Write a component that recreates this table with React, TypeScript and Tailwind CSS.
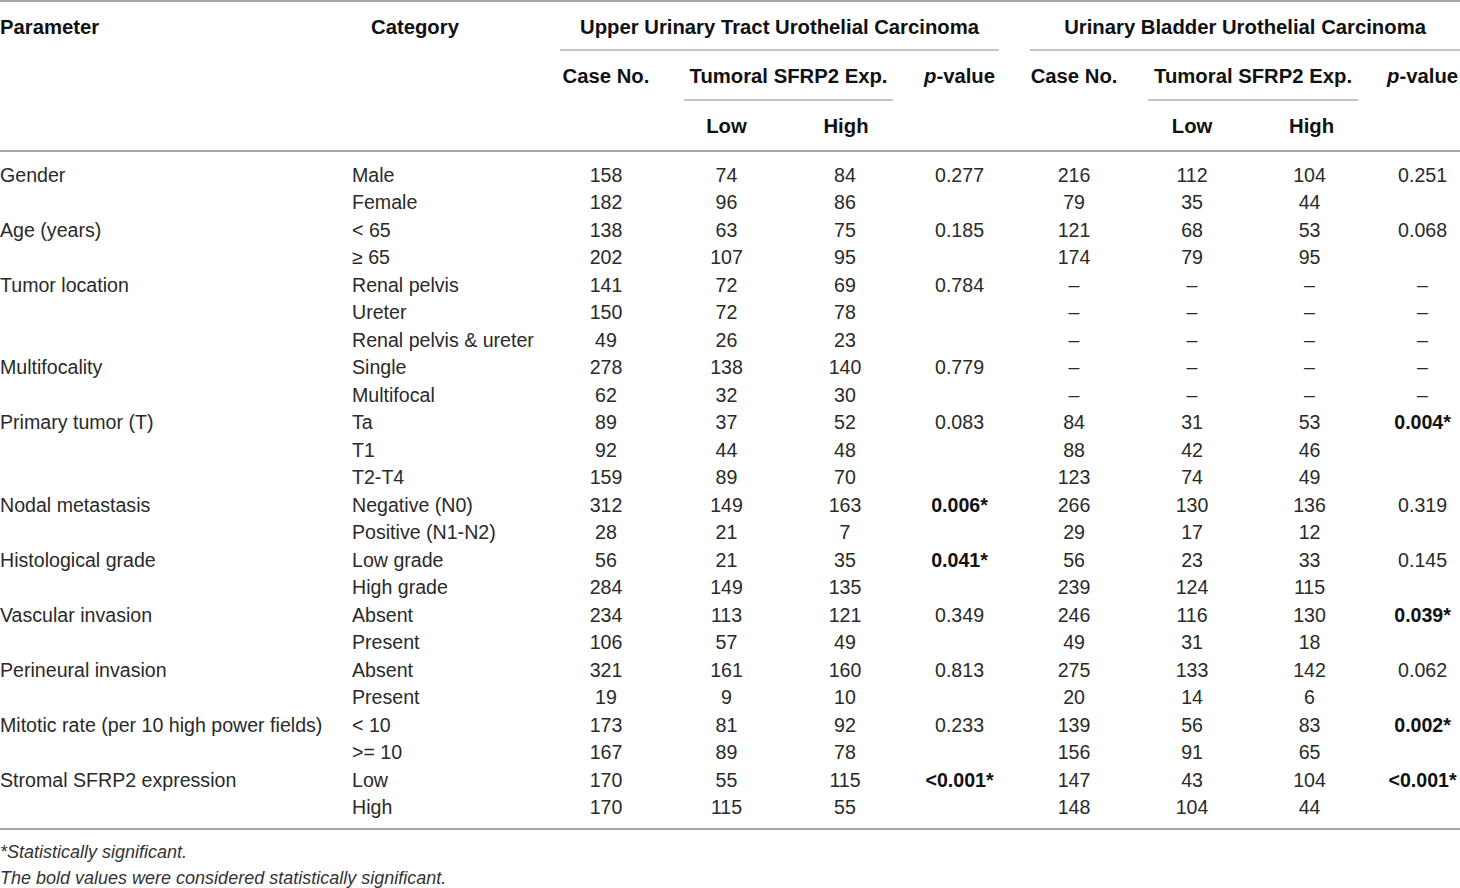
import React from 'react';

type Row = {
    param?: string;
    cat: string;
    a: string[];
    b: string[];
};

const ROWS: Row[] = [
    { param: 'Gender', cat: 'Male', a: ['158', '74', '84', '0.277'], b: ['216', '112', '104', '0.251'] },
    { cat: 'Female', a: ['182', '96', '86', ''], b: ['79', '35', '44', ''] },
    { param: 'Age (years)', cat: '< 65', a: ['138', '63', '75', '0.185'], b: ['121', '68', '53', '0.068'] },
    { cat: '≥ 65', a: ['202', '107', '95', ''], b: ['174', '79', '95', ''] },
    { param: 'Tumor location', cat: 'Renal pelvis', a: ['141', '72', '69', '0.784'], b: ['–', '–', '–', '–'] },
    { cat: 'Ureter', a: ['150', '72', '78', ''], b: ['–', '–', '–', '–'] },
    { cat: 'Renal pelvis & ureter', a: ['49', '26', '23', ''], b: ['–', '–', '–', '–'] },
    { param: 'Multifocality', cat: 'Single', a: ['278', '138', '140', '0.779'], b: ['–', '–', '–', '–'] },
    { cat: 'Multifocal', a: ['62', '32', '30', ''], b: ['–', '–', '–', '–'] },
    { param: 'Primary tumor (T)', cat: 'Ta', a: ['89', '37', '52', '0.083'], b: ['84', '31', '53', '0.004*'] },
    { cat: 'T1', a: ['92', '44', '48', ''], b: ['88', '42', '46', ''] },
    { cat: 'T2-T4', a: ['159', '89', '70', ''], b: ['123', '74', '49', ''] },
    { param: 'Nodal metastasis', cat: 'Negative (N0)', a: ['312', '149', '163', '0.006*'], b: ['266', '130', '136', '0.319'] },
    { cat: 'Positive (N1-N2)', a: ['28', '21', '7', ''], b: ['29', '17', '12', ''] },
    { param: 'Histological grade', cat: 'Low grade', a: ['56', '21', '35', '0.041*'], b: ['56', '23', '33', '0.145'] },
    { cat: 'High grade', a: ['284', '149', '135', ''], b: ['239', '124', '115', ''] },
    { param: 'Vascular invasion', cat: 'Absent', a: ['234', '113', '121', '0.349'], b: ['246', '116', '130', '0.039*'] },
    { cat: 'Present', a: ['106', '57', '49', ''], b: ['49', '31', '18', ''] },
    { param: 'Perineural invasion', cat: 'Absent', a: ['321', '161', '160', '0.813'], b: ['275', '133', '142', '0.062'] },
    { cat: 'Present', a: ['19', '9', '10', ''], b: ['20', '14', '6', ''] },
    { param: 'Mitotic rate (per 10 high power fields)', cat: '< 10', a: ['173', '81', '92', '0.233'], b: ['139', '56', '83', '0.002*'] },
    { cat: '>= 10', a: ['167', '89', '78', ''], b: ['156', '91', '65', ''] },
    { param: 'Stromal SFRP2 expression', cat: 'Low', a: ['170', '55', '115', '<0.001*'], b: ['147', '43', '104', '<0.001*'] },
    { cat: 'High', a: ['170', '115', '55', ''], b: ['148', '104', '44', ''] },
];

function Num({ v, last }: { v: string; last?: boolean }) {
    const bold = v.endsWith('*');
    return (
        <td className={`p-0 text-center ${last ? 'pl-[18px]' : ''} ${bold ? 'font-bold text-[#111]' : ''}`}>
            {v}
        </td>
    );
}

export default function App() {
    return (
        <div
            className="w-[1460px] h-[888px] bg-white text-[#2a2a2a] overflow-hidden"
            style={{ fontFamily: '"Liberation Sans", Arial, sans-serif' }}
        >
            <table className="table-fixed border-collapse w-[1460px] border-t-2 border-[#a6a6a6] text-[19.6px] leading-[20px]">
                <colgroup>
                    <col className="w-[340px]" />
                    <col className="w-[206px]" />
                    <col className="w-[120px]" />
                    <col className="w-[121px]" />
                    <col className="w-[116px]" />
                    <col className="w-[113px]" />
                    <col className="w-[116px]" />
                    <col className="w-[120px]" />
                    <col className="w-[115px]" />
                    <col className="w-[93px]" />
                </colgroup>
                <thead className="font-bold text-[#111] text-[20.3px] leading-[24px]">
                    <tr className="h-[49px]">
                        <th rowSpan={3} className="p-0 pt-[13px] align-top text-left">Parameter</th>
                        <th rowSpan={3} className="p-0 pt-[13px] pl-[31px] align-top text-left">Category</th>
                        <th colSpan={4} className="p-0 align-bottom">
                            <div className="ml-[14px] mr-[17px] h-[49px] pt-[2px] flex items-center justify-center border-b-2 border-[#c4c4c4]">
                                Upper Urinary Tract Urothelial Carcinoma
                            </div>
                        </th>
                        <th colSpan={4} className="p-0 align-bottom">
                            <div className="ml-[14px] h-[49px] pt-[2px] flex items-center justify-center border-b-2 border-[#c4c4c4]">
                                Urinary Bladder Urothelial Carcinoma
                            </div>
                        </th>
                    </tr>
                    <tr className="h-[50px]">
                        <th rowSpan={2} className="p-0 pt-[13px] align-top">Case No.</th>
                        <th colSpan={2} className="p-0 align-bottom">
                            <div className="ml-[18px] mr-[10px] h-[50px] pt-[2px] flex items-center justify-center border-b-2 border-[#c4c4c4]">
                                Tumoral SFRP2 Exp.
                            </div>
                        </th>
                        <th rowSpan={2} className="p-0 pt-[13px] align-top">
                            <i>p</i>-value
                        </th>
                        <th rowSpan={2} className="p-0 pt-[13px] align-top">Case No.</th>
                        <th colSpan={2} className="p-0 align-bottom">
                            <div className="ml-[16px] mr-[9px] h-[50px] pt-[2px] flex items-center justify-center border-b-2 border-[#c4c4c4]">
                                Tumoral SFRP2 Exp.
                            </div>
                        </th>
                        <th rowSpan={2} className="p-0 pt-[13px] pl-[18px] align-top whitespace-nowrap">
                            <i>p</i>-value
                        </th>
                    </tr>
                    <tr className="h-[50px] border-b-2 border-[#a6a6a6]">
                        <th className="p-0">Low</th>
                        <th className="p-0 pl-[2px]">High</th>
                        <th className="p-0">Low</th>
                        <th className="p-0 pl-[4px]">High</th>
                    </tr>
                </thead>
                <tbody className="border-b-2 border-[#a6a6a6]">
                    <tr className="h-[10px]">
                        <td colSpan={10} className="p-0" />
                    </tr>
                    {ROWS.map((r, i) => (
                        <tr key={i} className="h-[27.5px]">
                            <td className="p-0 whitespace-nowrap">{r.param ?? ''}</td>
                            <td className="p-0 pl-[12px] whitespace-nowrap">{r.cat}</td>
                            {r.a.map((v, j) => (
                                <Num key={`a${j}`} v={v} />
                            ))}
                            {r.b.map((v, j) => (
                                <Num key={`b${j}`} v={v} last={j === 3} />
                            ))}
                        </tr>
                    ))}
                    <tr className="h-[8px]">
                        <td colSpan={10} className="p-0" />
                    </tr>
                </tbody>
            </table>
            <div className="pt-[9px] italic text-[18px] text-[#333] leading-[26px]">
                <p>*Statistically significant.</p>
                <p>The bold values were considered statistically significant.</p>
            </div>
        </div>
    );
}
